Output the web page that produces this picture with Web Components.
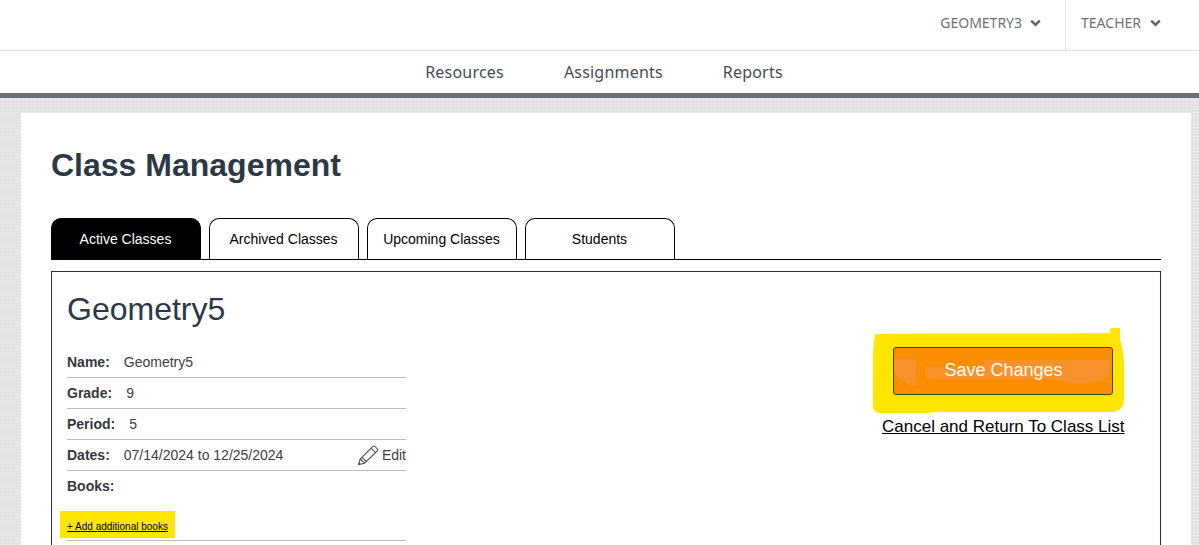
<!DOCTYPE html>
<html>
<head>
<meta charset="utf-8">
<title>Class Management</title>
<style>
  html, body { margin: 0; height: 545px; overflow: hidden; }
  body {
    font-family: "Liberation Sans", Arial, sans-serif;
    background-color: #e5e5e5;
    background-image:
      repeating-linear-gradient(0deg, rgba(255,255,255,.18) 0 1px, transparent 1px 3px),
      repeating-linear-gradient(90deg, rgba(0,0,0,.018) 0 1px, transparent 1px 2px);
  }
</style>
</head>
<body>
<app-header>
  <user-menu slot="menus">GEOMETRY3</user-menu>
  <user-menu slot="menus" divided>TEACHER</user-menu>
  <a slot="links">Resources</a>
  <a slot="links">Assignments</a>
  <a slot="links">Reports</a>
</app-header>

<page-card heading="Class Management">
  <tab-bar>
    <tab-item active>Active Classes</tab-item>
    <tab-item>Archived Classes</tab-item>
    <tab-item>Upcoming Classes</tab-item>
    <tab-item>Students</tab-item>
  </tab-bar>
  <class-panel heading="Geometry5">
    <info-row label="Name:">Geometry5</info-row>
    <info-row label="Grade:">9</info-row>
    <info-row label="Period:">5</info-row>
    <info-row label="Dates:" editable>07/14/2024 to 12/25/2024</info-row>
    <books-row></books-row>
    <save-actions slot="actions"></save-actions>
  </class-panel>
</page-card>

<script>
'use strict'
;(function() {
  // small helper, every element just sets its html in an open shadow root
  class Base extends HTMLElement {
    constructor() {
      super()
      this.attachShadow({ mode: 'open' }).innerHTML = this.html()
    }
  }

  class AppHeader extends Base {
    html() {
      return `
        <style>
          :host { display: block; background: #fff; border-bottom: 5px solid #66707c; }
          .top { display: flex; justify-content: flex-end; height: 50px; border-bottom: 1px solid #e3e3e3; }
          .nav { display: flex; justify-content: center; gap: 60px; height: 42px; align-items: center;
            font: 16px "Noto Sans", sans-serif; color: #444c57; letter-spacing: .2px; padding-left: 9px; }
          ::slotted(a) { display: block; }
        </style>
        <div class="top"><slot name="menus"></slot></div>
        <div class="nav"><slot name="links"></slot></div>
      `
    }
  }

  class UserMenu extends Base {
    html() {
      return `
        <style>
          :host { display: flex; align-items: center; gap: 8px; height: 44px; padding: 0 24px 6px 0;
            font: 14px "Noto Sans", sans-serif; color: #6c727a; }
          :host([divided]) { border-left: 1px solid #e3e3e3; gap: 9px; padding-left: 15px; padding-right: 38px; }
          svg { display: block; margin-top: 1px; }
        </style>
        <slot></slot>
        <svg width="11" height="8" viewBox="0 0 11 8"><path d="M1.2 1.6 5.5 5.8 9.8 1.6" fill="none" stroke="#5b626b" stroke-width="2.4"/></svg>
      `
    }
  }

  class PageCard extends Base {
    html() {
      const heading = this.getAttribute('heading')
      return `
        <style>
          :host { display: block; background: #fff; margin: 15px 8px 0 21px; padding: 30px 30px 0; height: 432px; overflow: hidden; }
          h1 { margin: 0; font: bold 32px/44px "Liberation Sans", sans-serif; color: #2c3845; padding-bottom: 31px; }
        </style>
        <h1>${heading}</h1>
        <slot></slot>
      `
    }
  }

  class TabBar extends Base {
    html() {
      return `
        <style>
          :host { display: flex; gap: 8px; border-bottom: 1px solid #000; margin-bottom: 11px; }
        </style>
        <slot></slot>
      `
    }
  }

  class TabItem extends Base {
    html() {
      return `
        <style>
          :host { display: flex; box-sizing: border-box; width: 150px; height: 41px; align-items: center; justify-content: center;
            border: 1px solid #000; border-bottom: 0; border-radius: 10px 10px 0 0; padding-right: 1px;
            font: 14px "Liberation Sans", sans-serif; color: #000; background: #fff; }
          :host([active]) { background: #000; color: #fff; }
        </style>
        <slot></slot>
      `
    }
  }

  class ClassPanel extends Base {
    html() {
      const heading = this.getAttribute('heading')
      return `
        <style>
          :host { display: flex; justify-content: space-between; border: 1px solid #2c3440; padding: 0 36px 0 15px; height: 300px; }
          .left { width: 339px; }
          h2 { margin: 0; font: 32px/38px "Liberation Sans", sans-serif; color: #2c3845; padding: 18px 0 19px; }
        </style>
        <div class="left">
          <h2>${heading}</h2>
          <slot></slot>
        </div>
        <slot name="actions"></slot>
      `
    }
  }

  class InfoRow extends Base {
    html() {
      const label = this.getAttribute('label')
      const edit = this.hasAttribute('editable') ? `
        <span class="edit">
          <svg width="22" height="21" viewBox="0 0 22 21" fill="none" stroke="#555" stroke-width="1.1">
            <path d="M1.6 19.6 3.2 14 15.6 1.6c.8-.7 1.8-.7 2.5 0l2 2c.7.7.7 1.7 0 2.4L7.6 18.2Z"/>
            <path d="M3.2 14l4.4 4.2M5 12.3l4.4 4.2M14 3.2l4.6 4.5"/>
            <path d="M1.2 20 1.9 17.4 3.9 19.3Z" fill="#444" stroke="none"/>
          </svg>
          Edit
        </span>` : ''
      return `
        <style>
          :host { display: flex; align-items: center; height: 30px; border-bottom: 1px solid #bdbdbd;
            font: 14px "Liberation Sans", sans-serif; color: #3a3f45; }
          b { margin-right: 14px; color: #33383e; }
          .edit { margin-left: auto; display: flex; align-items: center; gap: 3px; }
        </style>
        <b>${label}</b><slot></slot>${edit}
      `
    }
  }

  class BooksRow extends Base {
    html() {
      return `
        <style>
          :host { display: block; height: 69px; border-bottom: 1px solid #bdbdbd; box-sizing: content-box;
            font: 14px "Liberation Sans", sans-serif; color: #33383e; }
          b { display: block; line-height: 30px; }
          a { display: inline-block; margin: 10px 0 0 -7px; padding: 0 7px; height: 27px; line-height: 32px; background: #ffe600;
            font-size: 10px; color: #000; text-decoration: underline; }
        </style>
        <b>Books:</b>
        <a>+ Add additional books</a>
      `
    }
  }

  class SaveActions extends Base {
    html() {
      return `
        <style>
          :host { display: block; width: 243px; padding-top: 75px; text-align: center; position: relative; }
          svg { position: absolute; left: -9px; top: 55px; }
          button { position: relative; display: block; box-sizing: border-box; width: 220px; height: 48px; margin: 0 auto 22px;
            background: #f98e00; border: 1px solid #2f4a2f; border-radius: 3px; padding: 0 0 2px 2px;
            font: 18px "Liberation Sans", sans-serif; color: #fff; }
          button span { position: relative; }
          a { margin-left: 1px; font-size: 17px; color: #000; text-decoration: underline; white-space: nowrap; }
        </style>
        <svg width="256" height="90" viewBox="0 0 256 90">
          <path fill="#ffe600" d="M3 7C60 6 180 7 238 6L238 2Q238 1 240 1L248 1 248 12C250 20 252 28 252 38L252 72Q252 84 240 85L60 85 58 86 8 86Q1 86 1 78L1 30Q1 18 3 7Z"/>
        </svg>
        <button>
          <svg style="left:0;top:0" width="218" height="46" viewBox="0 0 218 46">
            <path fill="#f8922a" d="M0 11H22V38C10 36 0 30 0 20ZM31 19H90V12H216V22C216 30 205 35 190 35H175L160 31H40C33 31 31 29 31 24Z"/>
          </svg>
          <span>Save Changes</span>
        </button>
        <a>Cancel and Return To Class List</a>
      `
    }
  }

  customElements.define('app-header', AppHeader)
  customElements.define('user-menu', UserMenu)
  customElements.define('page-card', PageCard)
  customElements.define('tab-bar', TabBar)
  customElements.define('tab-item', TabItem)
  customElements.define('class-panel', ClassPanel)
  customElements.define('info-row', InfoRow)
  customElements.define('books-row', BooksRow)
  customElements.define('save-actions', SaveActions)
})()
</script>
</body>
</html>
